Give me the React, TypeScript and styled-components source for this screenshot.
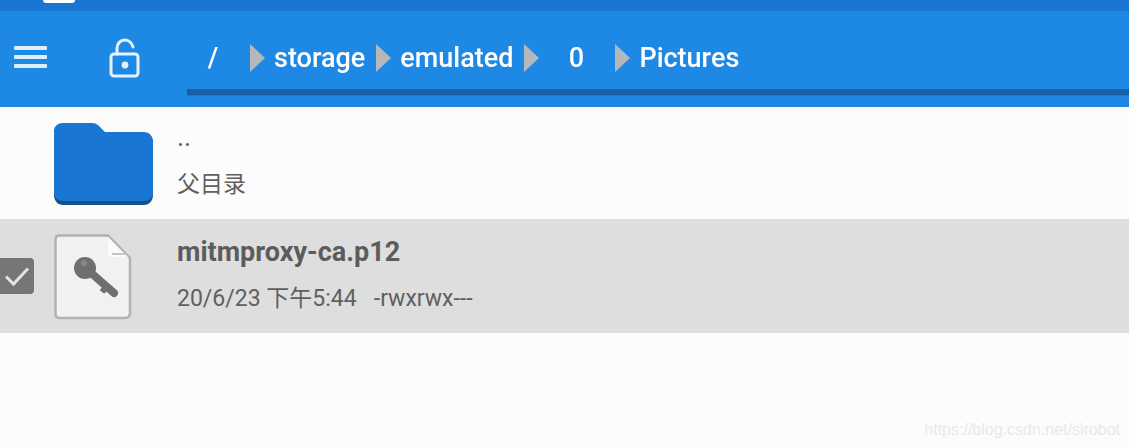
import React from 'react';
import styled, { createGlobalStyle } from 'styled-components';

const GlobalStyle = createGlobalStyle`
  html, body {
    margin: 0;
    padding: 0;
    background: #fcfcfc;
    font-family: Roboto, "Noto Sans CJK SC", sans-serif;
  }
`;

const Screen = styled.div`
  position: relative;
  width: 1129px;
  height: 448px;
  overflow: hidden;
  background: #fcfcfc;
`;

const StatusBar = styled.div`
  height: 11px;
  background: #1976d2;
  padding-left: 43px;
`;

const StatusIcon = styled.div`
  width: 32px;
  height: 3px;
  background: #fff;
  border-radius: 0 0 5px 5px;
`;

const Toolbar = styled.div`
  height: 96px;
  background: #1e88e5;
  display: flex;
  align-items: stretch;
`;

const IconSlot = styled.div<{ $width: number }>`
  width: ${(p) => p.$width}px;
  flex: none;
  display: flex;
  align-items: center;
  justify-content: center;
  padding-bottom: 2px;
  box-sizing: border-box;
  filter: blur(0.4px);
`;

const Crumbs = styled.div`
  flex: 1;
  height: 84px;
  display: flex;
  align-items: center;
  padding-top: 16px;
  box-sizing: border-box;
  border-bottom: 6px solid #1a5fa8;
  box-shadow: 0 1px 1px rgba(25, 95, 168, 0.4);
  color: #fff;
  font-size: 27px;
  font-weight: 500;
  filter: blur(0.3px);
`;

const Crumb = styled.span<{ $width?: number }>`
  display: block;
  width: ${(p) => (p.$width ? `${p.$width}px` : 'auto')};
  text-align: center;
  line-height: 32px;
  white-space: nowrap;
`;

const Arrow = styled.span`
  width: 0;
  height: 0;
  flex: none;
  margin: 0 9px 0 11px;
  border-style: solid;
  border-width: 14px 0 14px 15px;
  border-color: transparent transparent transparent #b5b8bb;
`;

const Row = styled.div<{ $selected?: boolean }>`
  height: ${(p) => (p.$selected ? 114 : 112)}px;
  background: ${(p) => (p.$selected ? '#dedede' : '#fcfcfc')};
  display: flex;
  align-items: stretch;
`;

const CheckSlot = styled.div`
  width: 54px;
  flex: none;
  display: flex;
  align-items: center;
  padding-bottom: 1px;
`;

const CheckBox = styled.div`
  width: 34px;
  height: 36px;
  margin-left: 0;
  background: #767676;
  border-radius: 0 4px 4px 0;
  display: flex;
  align-items: center;
  justify-content: center;
  filter: blur(0.3px);
`;

const Thumb = styled.div<{ $top: number }>`
  width: 123px;
  flex: none;
  padding-top: ${(p) => p.$top}px;
  box-sizing: border-box;
  filter: blur(0.4px);
  svg {
    display: block;
  }
`;

const Info = styled.div`
  flex: 1;
  color: #5c5c5c;
`;

const Title = styled.div<{ $bold?: boolean; $top: number }>`
  margin-top: ${(p) => p.$top}px;
  font-size: 27px;
  line-height: 32px;
  font-weight: ${(p) => (p.$bold ? 700 : 400)};
`;

const Meta = styled.div<{ $top: number }>`
  margin-top: ${(p) => p.$top}px;
  font-size: 23px;
  line-height: 30px;
  white-space: pre;
  color: #606060;
`;

const Watermark = styled.div`
  position: absolute;
  right: 9px;
  bottom: 8px;
  font-family: "Liberation Sans", Arial, sans-serif;
  font-size: 16px;
  line-height: 20px;
  color: #e9e9e9;
`;

const MenuIcon = () => (
  <svg width="36" height="28" viewBox="0 0 36 28">
    <g fill="#dfeefb">
      <rect x="1" y="2" width="33" height="4" rx="1" />
      <rect x="1" y="11" width="33" height="4" rx="1" />
      <rect x="1" y="20" width="33" height="4" rx="1" />
    </g>
  </svg>
);

const LockIcon = () => (
  <svg width="34" height="42" viewBox="0 0 34 42" fill="none">
    <path
      d="M9 17V11.5C9 6.5 12.5 3 16.5 3S24 6 25 10"
      stroke="#e6f1fc"
      strokeWidth="3"
      strokeLinecap="round"
    />
    <rect x="3" y="17" width="27" height="22" rx="3" stroke="#e6f1fc" strokeWidth="3" />
    <circle cx="17" cy="28" r="3.4" fill="#e6f1fc" />
  </svg>
);

const FolderIcon = () => (
  <svg width="100" height="84" viewBox="0 0 100 84">
    <path
      d="M9 2H38C41 2 43 3 45 5L51 11H90C95 11 99 15 99 20V72C99 78 95 82 90 82H9C4 82 0 78 0 72V10C0 5 4 2 9 2Z"
      fill="#14508f"
    />
    <path
      d="M9 0H38C41 0 43 1 45 3L51 9H90C95 9 99 13 99 18V69C99 75 95 78 90 78H9C4 78 0 75 0 69V8C0 3 4 0 9 0Z"
      fill="#1976d2"
    />
  </svg>
);

const KeyFileIcon = () => (
  <svg width="78" height="86" viewBox="0 0 78 86">
    <path
      d="M5 1.5H54L76 24V79C76 82 74 84 71 84H5C3 84 1.5 82 1.5 79V5C1.5 3 3 1.5 5 1.5Z"
      fill="#eff1f3"
      stroke="#b0b2b4"
      strokeWidth="2.5"
    />
    <path d="M54 3V20C54 22 55 23 57 23H74Z" fill="#fafafa" />
    <path d="M58 20H72" stroke="#c4c6c8" strokeWidth="2" />
    <path d="M36 38L60 59" stroke="#6f6f6f" strokeWidth="8" strokeLinecap="round" />
    <path d="M52 53L48 58" stroke="#6f6f6f" strokeWidth="6" />
    <circle cx="31" cy="34" r="11" fill="#6f6f6f" />
    <circle cx="30" cy="29" r="3" fill="#8a8a8a" />
  </svg>
);

const CheckIcon = () => (
  <svg width="26" height="22" viewBox="0 0 26 22" fill="none">
    <path d="M2 11.5L9.5 19L24 3.5" stroke="#e4e4e4" strokeWidth="3" />
  </svg>
);

const App: React.FC = () => {
  return (
    <Screen>
      <GlobalStyle />
      <StatusBar>
        <StatusIcon />
      </StatusBar>
      <Toolbar>
        <IconSlot $width={62}>
          <MenuIcon />
        </IconSlot>
        <IconSlot $width={125}>
          <LockIcon />
        </IconSlot>
        <Crumbs>
          <Crumb $width={52}>/</Crumb>
          <Arrow />
          <Crumb>storage</Crumb>
          <Arrow />
          <Crumb>emulated</Crumb>
          <Arrow />
          <Crumb $width={56}>0</Crumb>
          <Arrow />
          <Crumb>Pictures</Crumb>
        </Crumbs>
      </Toolbar>
      <Row>
        <CheckSlot />
        <Thumb $top={16}>
          <FolderIcon />
        </Thumb>
        <Info>
          <Title $top={14}>..</Title>
          <Meta $top={17}>父目录</Meta>
        </Info>
      </Row>
      <Row $selected>
        <CheckSlot>
          <CheckBox>
            <CheckIcon />
          </CheckBox>
        </CheckSlot>
        <Thumb $top={15}>
          <KeyFileIcon />
        </Thumb>
        <Info>
          <Title $bold $top={17}>
            mitmproxy-ca.p12
          </Title>
          <Meta $top={16}>{'20/6/23 下午5:44   -rwxrwx---'}</Meta>
        </Info>
      </Row>
      <Watermark>https://blog.csdn.net/sirobot</Watermark>
    </Screen>
  );
};

export default App;
